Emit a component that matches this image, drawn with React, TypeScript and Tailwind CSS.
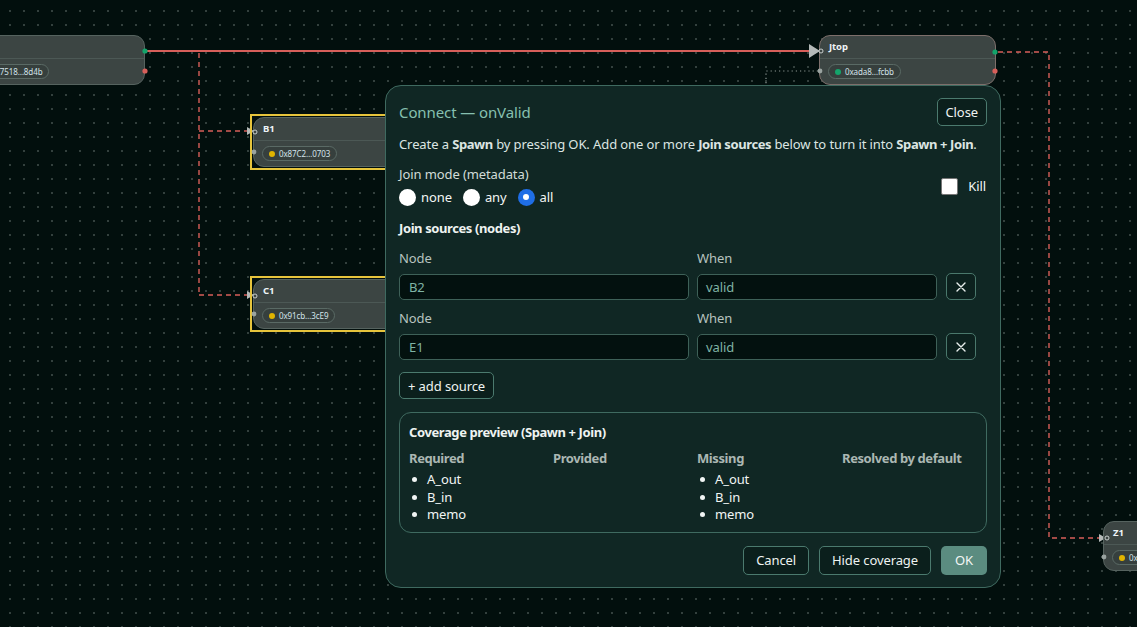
import React from 'react';

type NodeProps = {
  title: string;
  addr: string;
  dot: string;
  className?: string;
  tint?: string;
};

// a graph node card on the canvas
function GraphNode({ title, addr, dot, className = '', tint = 'border-[#56635f]' }: NodeProps) {
  return (
    <div className={`h-[50px] rounded-[11px] border bg-[#3c4543] ${tint} ${className}`}>
      <div className="flex h-[23px] items-center border-b border-[#4c5855] pl-[9px] text-[9.5px] font-bold text-[#eef4f7]">
        {title}
      </div>
      <div className="flex h-[25px] items-center pl-[8px]">
        <div className="flex h-[15px] items-center gap-[4px] rounded-full border border-[#5a6a65] bg-[#363f3d] px-[6px] text-[8px] leading-[12px] text-[#d3e3ea]">
          <span className={`h-[6px] w-[6px] rounded-full ${dot}`} />
          {addr}
        </div>
      </div>
    </div>
  );
}

function Radio({ label, checked = false }: { label: string; checked?: boolean }) {
  return (
    <label className="flex items-center gap-[5px]">
      {checked ? (
        <span className="flex h-[17px] w-[17px] items-center justify-center rounded-full bg-[#1f6ee6]">
          <span className="h-[6px] w-[6px] rounded-full bg-white" />
        </span>
      ) : (
        <span className="h-[17px] w-[17px] rounded-full bg-white" />
      )}
      <span className="text-[#f3f6f5]">{label}</span>
    </label>
  );
}

function XIcon() {
  return (
    <svg width="12" height="12" viewBox="0 0 12 12" fill="none">
      <path d="M2 2 L10 10 M10 2 L2 10" stroke="#e8eeec" strokeWidth="1.4" strokeLinecap="round" />
    </svg>
  );
}

function SourceRow({ node, when }: { node: string; when: string }) {
  return (
    <div>
      <div className="flex gap-[8px] leading-[17px] text-[#b7c3bf]">
        <span className="w-[290px]">Node</span>
        <span>When</span>
      </div>
      <div className="mt-[6px] flex items-center">
        <div className="flex h-[26px] w-[290px] items-center rounded-[5px] border border-[#3e6158] bg-[#03110f] px-[9px] text-[#7fb3a5]">
          {node}
        </div>
        <div className="ml-[8px] flex h-[26px] w-[240px] items-center rounded-[5px] border border-[#3e6158] bg-[#03110f] px-[8px] text-[#7fb3a5]">
          {when}
        </div>
        <button className="ml-[9px] flex h-[27px] w-[30px] items-center justify-center rounded-[5px] border border-[#4a786c] bg-[#0c211e]">
          <XIcon />
        </button>
      </div>
    </div>
  );
}

function CoverageCol({ title, items }: { title: string; items: string[] }) {
  return (
    <div>
      <div className="font-bold tracking-[-0.4px] text-[#abb7b3]">{title}</div>
      <ul className="mt-[4px] leading-[17.5px] text-[#f1f5f4]">
        {items.map(i => (
          <li key={i} className="flex items-center">
            <span className="ml-[3px] mr-[10px] h-[5px] w-[5px] rounded-full bg-[#f1f5f4]" />
            {i}
          </li>
        ))}
      </ul>
    </div>
  );
}

function Edges() {
  const red = '#d75f5a';
  return (
    <svg className="absolute inset-0" width="1137" height="627">
      {/* solid main edge into Jtop */}
      <path d="M145 51 H810" stroke={red} strokeWidth="2.2" fill="none" />
      <polygon points="809,44 820,51 809,58" fill="#b4b9b8" />
      {/* dashed branch to B1 and C1 */}
      <path d="M199 53 V296 M199 131 H247 M199 295 H247" stroke={red} strokeWidth="1.4" strokeDasharray="5 4" fill="none" />
      <polygon points="247,127 254,131 247,135" fill="#b4b9b8" />
      <polygon points="247,291 254,295 247,299" fill="#b4b9b8" />
      {/* dashed from Jtop to Z1 */}
      <path d="M998 52 H1049 V538 H1100" stroke={red} strokeWidth="1.4" strokeDasharray="5 4" fill="none" />
      <polygon points="1099,534 1106,538 1099,542" fill="#b4b9b8" />
      {/* dotted link into Jtop */}
      <path d="M818 71 H766 V86" stroke="#8e9894" strokeWidth="1.2" strokeDasharray="1.2 3" fill="none" />
    </svg>
  );
}

function Ports() {
  return (
    <svg className="absolute inset-0" width="1137" height="627">
      <circle cx="145" cy="51" r="2.6" fill="#13a36a" />
      <circle cx="145" cy="71" r="2.6" fill="#d75f5a" />
      <circle cx="995" cy="52" r="2.6" fill="#13a36a" />
      <circle cx="995" cy="71" r="2.6" fill="#d75f5a" />
      <circle cx="821" cy="51" r="2" fill="#3c4543" stroke="#d7dcdb" strokeWidth="0.9" />
      <circle cx="820" cy="71" r="2.4" fill="#9aa3a0" />
      <circle cx="255" cy="132" r="2" fill="#3c4543" stroke="#d7dcdb" strokeWidth="0.9" />
      <circle cx="254" cy="152" r="2.4" fill="#9aa3a0" />
      <circle cx="255" cy="296" r="2" fill="#3c4543" stroke="#d7dcdb" strokeWidth="0.9" />
      <circle cx="254" cy="314" r="2.4" fill="#9aa3a0" />
      <circle cx="1107" cy="538" r="2" fill="#3c4543" stroke="#d7dcdb" strokeWidth="0.9" />
      <circle cx="1104" cy="557" r="2.4" fill="#9aa3a0" />
    </svg>
  );
}

export default function App() {
  return (
    <div className="relative h-[627px] w-[1137px] overflow-hidden bg-[#020f0d] bg-[image:radial-gradient(circle,#33403d_0.9px,transparent_1.1px)] bg-[length:14px_14px] bg-[position:3px_4px] font-['Noto_Sans',sans-serif] text-[13px] leading-[18px] tracking-[-0.1px]">
      <Edges />

      {/* canvas nodes */}
      <GraphNode title="A1" addr="0x4f7518…8d4b" dot="bg-[#e0b400]" className="absolute left-[-42px] top-[35px] w-[187px]" />
      <GraphNode title="Jtop" addr="0xada8…fcbb" dot="bg-[#14a46b]" tint="border-[#7d6f6b]" className="absolute left-[819px] top-[35px] w-[177px]" />
      <div className="absolute left-[250px] top-[114px] border-2 border-[#e6c43c] p-[1px]">
        <GraphNode title="B1" addr="0x87C2…0703" dot="bg-[#e0b400]" className="w-[176px]" />
      </div>
      <div className="absolute left-[250px] top-[276px] border-2 border-[#e6c43c] p-[1px]">
        <GraphNode title="C1" addr="0x91cb…3cE9" dot="bg-[#e0b400]" className="w-[176px]" />
      </div>
      <GraphNode title="Z1" addr="0x8b21…a07c" dot="bg-[#e0b400]" className="absolute left-[1103px] top-[521px] w-[150px]" />

      <Ports />

      {/* connect dialog */}
      <div className="absolute left-[385px] top-[85px] w-[616px] rounded-[16px] border border-[#3f6a60] bg-[#102724] px-[13px] pb-[12px] pt-[12px] text-[#dce5e2]">
        <div className="flex items-center justify-between">
          <h2 className="text-[15px] text-[#86c0b0]">Connect — onValid</h2>
          <button className="h-[28px] rounded-[5px] border border-[#4b7a6e] bg-[#0b1f1c] px-[8px] text-[#eef3f1]">
            Close
          </button>
        </div>

        <p className="mt-[9px]">
          Create a <b className="tracking-[-0.4px]">Spawn</b> by pressing OK. Add one or more{' '}
          <b className="tracking-[-0.4px]">Join sources</b> below to turn it into{' '}
          <b className="tracking-[-0.4px]">Spawn + Join</b>.
        </p>

        <div className="mt-[13px] flex items-center justify-between">
          <div>
            <div className="leading-[17px] text-[#d2dcd8]">Join mode (metadata)</div>
            <div className="mt-[5px] flex items-center gap-[11px]">
              <Radio label="none" />
              <Radio label="any" />
              <Radio label="all" checked />
            </div>
          </div>
          <label className="flex items-center gap-[10px] pr-[1px]">
            <span className="h-[17px] w-[17px] rounded-[2px] border border-[#767676] bg-white" />
            <span className="text-[#f3f6f5]">Kill</span>
          </label>
        </div>

        <div className="mt-[13px] font-bold tracking-[-0.4px] text-[#eef3f1]">Join sources (nodes)</div>

        <div className="mt-[13px]">
          <SourceRow node="B2" when="valid" />
        </div>
        <div className="mt-[10px]">
          <SourceRow node="E1" when="valid" />
        </div>

        <button className="mt-[12px] h-[27px] rounded-[5px] border border-[#4b7a6e] bg-[#0b1f1c] px-[8px] text-[#eef3f1]">
          + add source
        </button>

        <div className="mt-[13px] rounded-[12px] border border-[#3f6a60] px-[9px] pb-[8px] pt-[10px]">
          <div className="font-bold tracking-[-0.4px] text-[#eef3f1]">Coverage preview (Spawn + Join)</div>
          <div className="mt-[8px] grid grid-cols-[144px_144px_145px_1fr]">
            <CoverageCol title="Required" items={['A_out', 'B_in', 'memo']} />
            <CoverageCol title="Provided" items={[]} />
            <CoverageCol title="Missing" items={['A_out', 'B_in', 'memo']} />
            <CoverageCol title="Resolved by default" items={[]} />
          </div>
        </div>

        <div className="mt-[13px] flex justify-end gap-[10px]">
          <button className="h-[29px] rounded-[5px] border border-[#4b7a6e] bg-[#0b1f1c] px-[12px] text-[#eef3f1]">
            Cancel
          </button>
          <button className="h-[29px] rounded-[5px] border border-[#4b7a6e] bg-[#0b1f1c] px-[12px] text-[#eef3f1]">
            Hide coverage
          </button>
          <button className="h-[29px] rounded-[5px] bg-[#5b8c80] px-[14px] text-[#f3f7f6]">OK</button>
        </div>
      </div>
    </div>
  );
}
